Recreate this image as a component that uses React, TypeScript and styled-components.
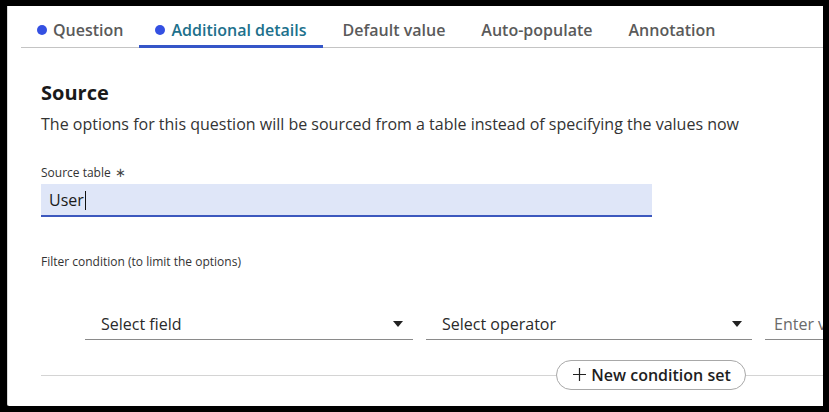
import React from 'react';
import styled, { createGlobalStyle } from 'styled-components';

const Global = createGlobalStyle`
  html,body{margin:0;padding:0;background:#000;}
  body{font-family:"Open Sans","Liberation Sans",sans-serif;color:#222;}
`;

/* ── Frame ── */
const Frame = styled.div`width:829px;height:412px;box-sizing:border-box;padding:6px 6px 6px 7px;background:#000;`;
const Panel = styled.div`
  width:816px;height:400px;background:#fff;overflow:hidden;
  border-left:1px solid #d8d8d8;box-sizing:border-box;border-bottom-left-radius:2px;
`;

/* ── Tabs ── */
const TabBar = styled.div`
  display:flex;gap:4px;height:42px;box-sizing:border-box;margin-left:13px;
  border-bottom:1px solid #c4c4c4;
`;
const Tab = styled.div<{ $active?: boolean }>`
  position:relative;display:flex;align-items:center;gap:6px;
  padding:6px 16px 0;font-size:16px;font-weight:600;white-space:nowrap;
  color:${p => (p.$active ? '#20708c' : '#5a5a5a')};
  &:first-child{padding-right:12px;}
  &::after{content:'';position:absolute;left:0;right:0;bottom:-1px;height:3px;
    background:${p => (p.$active ? '#3556c8' : 'transparent')};}
`;
const Dot = styled.span`width:10px;height:10px;border-radius:50%;background:#3450e2;display:inline-block;`;

/* ── Body ── */
const Body = styled.div`padding-left:33px;`;
const Heading = styled.h2`margin:31px 0 0;font-size:20px;line-height:28px;font-weight:700;color:#1a1a1a;`;
const Desc = styled.p`margin:5px 0 0;font-size:16px;line-height:24px;color:#333;`;
const Label = styled.div<{ $gap: number }>`margin-top:${p => p.$gap}px;font-size:12px;line-height:16px;color:#333;`;
const Req = styled.span`margin-left:4px;font-size:13px;font-weight:300;color:#444;`;

const Input = styled.div`
  margin-top:3px;width:611px;height:33px;box-sizing:border-box;
  background:#dfe6f8;border-bottom:2px solid #3c58be;
  display:flex;align-items:center;padding:1px 0 0 8px;font-size:16px;color:#1a1a1a;
`;
const Caret = styled.span`display:inline-block;width:1px;height:19px;background:#111;margin-left:1px;`;

const CondRow = styled.div`display:flex;gap:13px;margin:36px 0 0 44px;`;
const Select = styled.div<{ $w: number; $pl?: number }>`
  flex:none;width:${p => p.$w}px;height:34px;box-sizing:border-box;
  border-bottom:1px solid #8a8a8a;display:flex;align-items:center;justify-content:space-between;
  padding:2px 10px 0 ${p => p.$pl ?? 16}px;font-size:16px;color:#2a2a2a;
`;
const Placeholder = styled.span`color:#6a6a6a;white-space:nowrap;`;

const Divider = styled.div`display:flex;align-items:center;margin-top:20px;`;
const Line = styled.div<{ $w?: number }>`height:1px;background:#d4d4d4;${p => (p.$w ? `width:${p.$w}px;flex:none;` : 'flex:1;')}`;
const AddBtn = styled.button`
  flex:none;width:190px;height:30px;box-sizing:border-box;border:1px solid #a8a8a8;border-radius:15px;
  background:#fff;display:flex;align-items:center;justify-content:center;gap:5px;
  font-family:inherit;font-size:16px;font-weight:600;color:#1e1e1e;padding:0 0 1px 2px;
`;

const Chevron = () => (
  <svg width="10" height="6" viewBox="0 0 10 6"><path d="M0 0h10L5 6z" fill="#222" /></svg>
);
const Plus = () => (
  <svg width="13" height="13" viewBox="0 0 13 13"><path d="M6.5 0v13M0 6.5h13" stroke="#222" strokeWidth="1.2" /></svg>
);

const tabs = [
  { label: 'Question', dot: true },
  { label: 'Additional details', dot: true, active: true },
  { label: 'Default value' },
  { label: 'Auto-populate' },
  { label: 'Annotation' },
];

export default function App() {
  return (
    <Frame>
      <Global />
      <Panel>
        <TabBar>
          {tabs.map(t => (
            <Tab key={t.label} $active={t.active}>
              {t.dot && <Dot />}
              {t.label}
            </Tab>
          ))}
        </TabBar>
        <Body>
          <Heading>Source</Heading>
          <Desc>The options for this question will be sourced from a table instead of specifying the values now</Desc>
          <Label $gap={28}>Source table<Req>∗</Req></Label>
          <Input>User<Caret /></Input>
          <Label $gap={37}>Filter condition (to limit the options)</Label>
          <CondRow>
            <Select $w={328}>Select field<Chevron /></Select>
            <Select $w={326}>Select operator<Chevron /></Select>
            <Select $w={220} $pl={9}><Placeholder>Enter value</Placeholder></Select>
          </CondRow>
          <Divider>
            <Line $w={515} />
            <AddBtn><Plus />New condition set</AddBtn>
            <Line />
          </Divider>
        </Body>
      </Panel>
    </Frame>
  );
}
